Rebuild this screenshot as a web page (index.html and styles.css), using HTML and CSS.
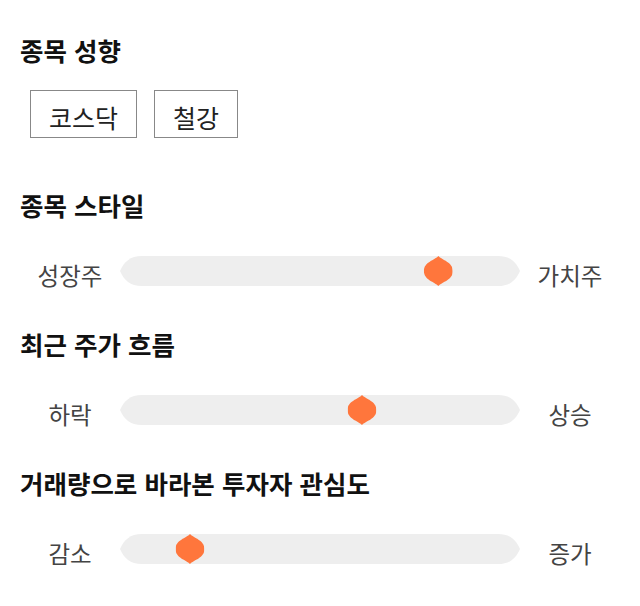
FILE: index.html
```html
<!DOCTYPE html>
<html lang="ko">
<head>
    <meta charset="UTF-8">
    <meta name="viewport" content="width=device-width, initial-scale=1.0">
    <title>종목 성향</title>
    <link rel="stylesheet" href="styles.css">
</head>
<body>
    <div class="profile">
        <section class="block">
            <h2 class="block-title">종목 성향</h2>
            <div class="tags">
                <button class="tag">코스닥</button>
                <button class="tag">철강</button>
            </div>
        </section>

        <section class="block">
            <h2 class="block-title">종목 스타일</h2>
            <div class="scale">
                <span class="scale-label">성장주</span>
                <div class="track">
                    <span class="thumb" style="left: 79.6%"></span>
                </div>
                <span class="scale-label">가치주</span>
            </div>
        </section>

        <section class="block">
            <h2 class="block-title">최근 주가 흐름</h2>
            <div class="scale">
                <span class="scale-label">하락</span>
                <div class="track">
                    <span class="thumb" style="left: 60.5%"></span>
                </div>
                <span class="scale-label">상승</span>
            </div>
        </section>

        <section class="block">
            <h2 class="block-title">거래량으로 바라본 투자자 관심도</h2>
            <div class="scale">
                <span class="scale-label">감소</span>
                <div class="track">
                    <span class="thumb" style="left: 17.5%"></span>
                </div>
                <span class="scale-label">증가</span>
            </div>
        </section>
    </div>
</body>
</html>
```

FILE: styles.css
```css
body {
    font-family: "Noto Sans CJK KR", "Noto Sans", sans-serif;
    background-color: #fff;
    color: #000;
    margin: 0;
    padding: 0 20px;
}

.profile {
    width: 600px;
    padding-top: 34px;
}

.block {
    margin-bottom: 38px;
}

.block-title {
    font-size: 25.5px;
    font-weight: bold;
    line-height: 32px;
    margin: 0;
    color: #111;
}

.tags {
    display: flex;
    gap: 17px;
    margin: 24px 0 0 10px;
    padding-bottom: 13px;
}

.tag {
    font-family: inherit;
    font-size: 25px;
    line-height: 32px;
    color: #222;
    background-color: #fff;
    border: 1px solid #888;
    padding: 10px 18px 4px;
    cursor: pointer;
}

.scale {
    display: grid;
    grid-template-columns: 100px 400px 100px;
    align-items: center;
    margin-top: 31px;
}

.scale-label {
    font-size: 23.5px;
    line-height: 30px;
    color: #444;
    text-align: center;
    padding-top: 8px;
}

.track {
    position: relative;
    height: 30px;
    background-color: #eeeeee;
    clip-path: path('M0 15 C4 6 10 0 22 0 H378 C390 0 396 6 400 15 C396 24 390 30 378 30 H22 C10 30 4 24 0 15 Z');
}

.thumb {
    position: absolute;
    top: 0;
    width: 29px;
    height: 30px;
    transform: translateX(-50%);
    background-color: #ff763c;
    clip-path: path('M14.5 0 C18 4 29 6 29 15 C29 24 18 26 14.5 30 C11 26 0 24 0 15 C0 6 11 4 14.5 0 Z');
}
```
